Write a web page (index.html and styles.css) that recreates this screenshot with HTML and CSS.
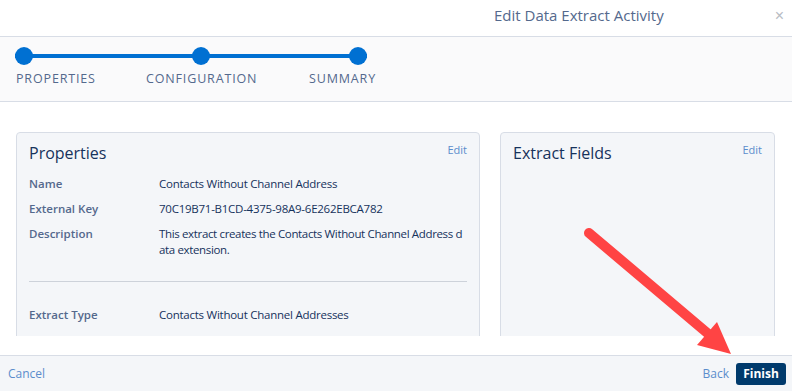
FILE: index.html
```html
<!DOCTYPE html>
<html lang="en">
<head>
  <meta charset="UTF-8" />
  <meta name="viewport" content="width=device-width, initial-scale=1" />
  <title>Edit Data Extract Activity</title>
  <link rel="stylesheet" href="styles.css">
</head>
<body>

<div class="modal">
  <header class="modal-header">
    <h1 class="modal-title">Edit Data Extract Activity</h1>
    <button class="close-btn" aria-label="Close">&times;</button>
  </header>

  <nav class="progress">
    <div class="track">
      <span class="dot"></span>
      <span class="dot dot-2"></span>
      <span class="dot dot-3"></span>
    </div>
    <div class="step-labels">
      <span>PROPERTIES</span>
      <span>CONFIGURATION</span>
      <span>SUMMARY</span>
    </div>
  </nav>

  <main class="content">
    <div class="scroll">
      <section class="card card-props">
        <div class="card-head">
          <h2>Properties</h2>
          <a href="#" class="edit-link">Edit</a>
        </div>
        <dl class="fields">
          <dt>Name</dt>
          <dd>Contacts Without Channel Address</dd>
          <dt>External Key</dt>
          <dd>70C19B71-B1CD-4375-98A9-6E262EBCA782</dd>
          <dt>Description</dt>
          <dd class="wrap">This extract creates the Contacts Without Channel Address data extension.</dd>
        </dl>
        <hr class="divider">
        <dl class="fields">
          <dt>Extract Type</dt>
          <dd>Contacts Without Channel Addresses</dd>
        </dl>
      </section>

      <section class="card card-fields">
        <div class="card-head">
          <h2>Extract Fields</h2>
          <a href="#" class="edit-link">Edit</a>
        </div>
      </section>
    </div>
  </main>

  <footer class="modal-footer">
    <a href="#" class="link">Cancel</a>
    <div class="footer-right">
      <a href="#" class="link">Back</a>
      <button class="finish-btn">Finish</button>
    </div>
  </footer>

  <!-- callout arrow drawn over the page -->
  <svg class="callout" width="792" height="391" viewBox="0 0 792 391">
    <line x1="589" y1="233" x2="712" y2="337" stroke="#ff4444" stroke-width="10" stroke-linecap="round" />
    <polygon points="697,345 717,322 731,354" fill="#ff4444" />
  </svg>
</div>

</body>
</html>
```

FILE: styles.css
```css
body {
  margin: 0;
  font-family: "Open Sans", "Noto Sans", sans-serif;
  color: #16325c;
  background: #fff;
}
.modal {
  position: relative;
  width: 792px;
  height: 391px;
  overflow: hidden;
  display: flex;
  flex-direction: column;
}
.modal-header {
  height: 37px;
  flex-shrink: 0;
  box-sizing: border-box;
  border-bottom: 1px solid #d8dde6;
  display: flex;
  align-items: center;
  padding: 0 8px 0 494px;
}
.modal-title {
  margin: 0;
  flex: 1;
  font-size: 15px;
  font-weight: 400;
  color: #54698d;
  margin-top: -7px;
}
.close-btn {
  border: none;
  background: none;
  padding: 0;
  font-size: 16px;
  line-height: 1;
  color: #b8bcc4;
  cursor: pointer;
  margin-top: -4px;
}
.progress {
  height: 65px;
  flex-shrink: 0;
  box-sizing: border-box;
  background: #fafafb;
  border-bottom: 1px solid #d8dde6;
  padding: 10px 0 0 15px;
}
.track {
  display: flex;
  width: 352px;
  height: 18px;
  background: linear-gradient(#0070d2, #0070d2) no-repeat center / 100% 4px;
}
.dot {
  width: 18px;
  height: 18px;
  border-radius: 50%;
  background: #0070d2;
}
.dot-2 {
  margin-left: 159px;
}
.dot-3 {
  margin-left: 139px;
}
.step-labels {
  display: grid;
  grid-template-columns: 130px 163px auto;
  margin: 5px 0 0 1px;
  font-size: 12.5px;
  letter-spacing: 0.85px;
  color: #54698d;
}
.content {
  flex: 1;
  padding: 30px 17px 0 16px;
}
.scroll {
  height: 204px;
  overflow: hidden;
  display: flex;
  gap: 20px;
}
.card {
  box-sizing: border-box;
  background: #f4f6f9;
  border: 1px solid #d8dde6;
  border-radius: 4px;
  padding: 10px 12px 0 12px;
  min-height: 230px;
}
.card-props {
  width: 464px;
}
.card-fields {
  flex: 1;
}
.card-head {
  display: flex;
  justify-content: space-between;
  align-items: flex-start;
}
.card-head h2 {
  margin: 0;
  font-size: 16px;
  font-weight: 400;
  line-height: 20px;
  color: #16325c;
}
.edit-link {
  font-size: 11px;
  color: #5b8dcc;
  text-decoration: none;
  line-height: 14px;
}
.fields {
  display: grid;
  grid-template-columns: 130px 1fr;
  row-gap: 9px;
  margin: 13px 0 0;
  font-size: 11.5px;
  line-height: 16px;
}
.fields dt {
  color: #54698d;
  font-weight: 600;
}
.fields dd {
  margin: 0;
  color: #16325c;
  letter-spacing: -0.25px;
}
.fields .wrap {
  word-break: break-all;
  letter-spacing: -0.35px;
}
.divider {
  border: none;
  border-top: 1px solid #cdd2da;
  margin: 23px 0 0;
}
.divider + .fields {
  margin-top: 25px;
}
.modal-footer {
  height: 36px;
  flex-shrink: 0;
  box-sizing: border-box;
  background: #f4f6f9;
  border-top: 1px solid #d8dde6;
  display: flex;
  align-items: center;
  justify-content: space-between;
  padding: 0 6px 0 8px;
  font-size: 12px;
}
.link {
  color: #5b8dcc;
  text-decoration: none;
}
.footer-right {
  display: flex;
  align-items: center;
  gap: 7px;
}
.finish-btn {
  height: 22px;
  width: 50px;
  border: none;
  border-radius: 3px;
  background: #003a6c;
  color: #fff;
  font-family: inherit;
  font-size: 12px;
  font-weight: 700;
  cursor: pointer;
}
.callout {
  position: absolute;
  top: 0;
  left: 0;
  pointer-events: none;
}
```
